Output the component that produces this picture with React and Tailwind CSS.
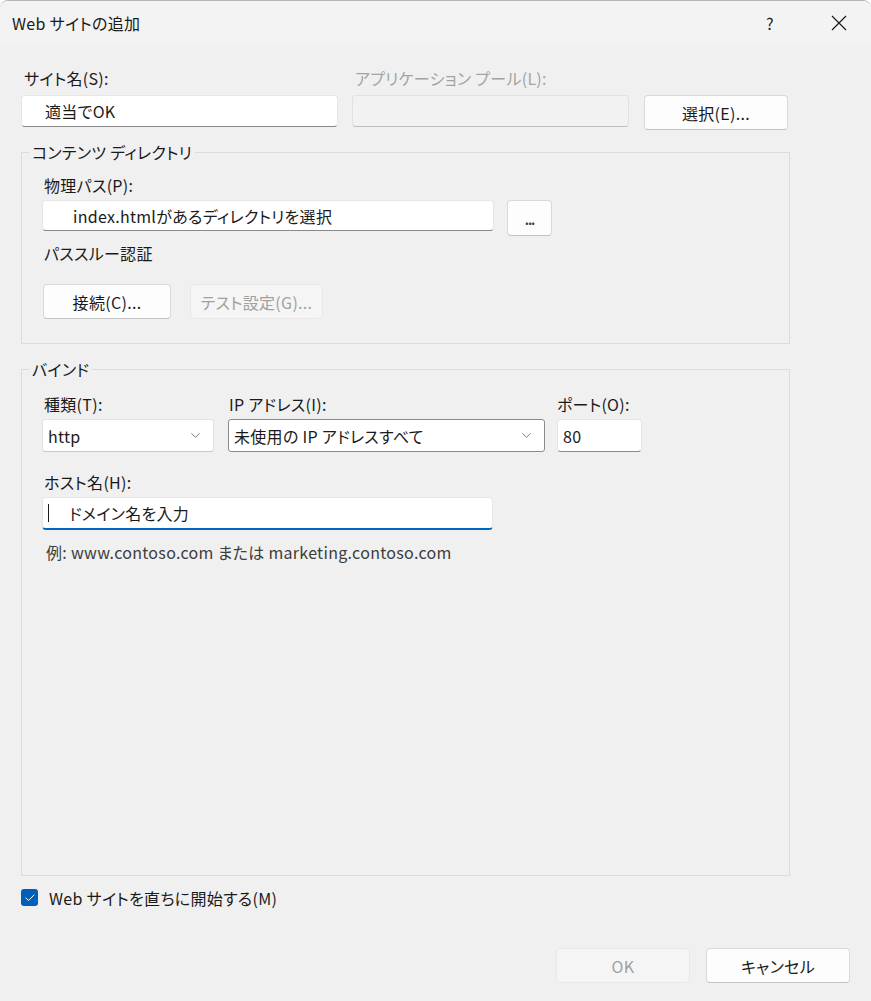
import React from 'react';
import { ChevronDown, Check } from 'lucide-react';

const font = "[font-family:'Noto_Sans_CJK_JP',sans-serif] [font-feature-settings:'palt'] tracking-[0.3px]";

const TextBox = ({ value, className = '', pad = 'pl-[5px]' }) => (
  <div
    className={`flex items-center bg-white border border-[#e6e6e6] border-b-[#8a8a8a] rounded-[4px] ${pad} ${className}`}
  >
    <span className="text-[16px] leading-[20px] text-[#1a1a1a] whitespace-nowrap">{value}</span>
  </div>
);

const Button = ({ children, className = '', disabled = false }) => (
  <button
    className={`flex items-center justify-center rounded-[4px] text-[16px] leading-[20px] ${
      disabled
        ? 'bg-[#f5f5f5] border border-[#e8e8e8] text-[#a0a0a0]'
        : 'bg-[#fdfdfd] border border-[#d9d9d9] border-b-[#c2c2c2] text-[#1a1a1a]'
    } ${className}`}
  >
    {children}
  </button>
);

const Select = ({ value, className = '', dark = false }) => (
  <div
    className={`flex items-center justify-between bg-white rounded-[3px] pl-[5px] pr-[10px] border ${
      dark ? 'border-[#8a8a8a]' : 'border-[#e3e3e3] border-b-[#c8c8c8]'
    } ${className}`}
  >
    <span className="text-[16px] leading-[20px] text-[#1a1a1a] whitespace-nowrap">{value}</span>
    <ChevronDown size={15} strokeWidth={1.3} className="text-[#5c5c5c]" />
  </div>
);

const Label = ({ children, className = '', muted = false }) => (
  <div
    className={`text-[16px] leading-[20px] whitespace-nowrap ${
      muted ? 'text-[#a3a3a3]' : 'text-[#1a1a1a]'
    } ${className}`}
  >
    {children}
  </div>
);

export default function App() {
  return (
    <div className={`w-[871px] h-[1001px] flex flex-col bg-[#f0f0f0] border-t border-[#b5b5b5] rounded-t-[8px] overflow-hidden ${font}`}>
      {/* title bar */}
      <div className="h-[44px] shrink-0 flex items-center justify-between pl-[12px] pr-[24px] bg-[#f3f3f3]">
        <span className="text-[16px] text-[#1a1a1a]">Web サイトの追加</span>
        <div className="flex items-center">
          <span className="text-[16px] text-[#1a1a1a] mr-[57px]">?</span>
          <svg width="16" height="16" viewBox="0 0 16 16">
            <path d="M1 1L15 15M15 1L1 15" stroke="#1a1a1a" strokeWidth="1.2" />
          </svg>
        </div>
      </div>

      <div className="flex-1 min-h-0 flex flex-col px-[21px]">
        {/* site name row */}
        <div className="flex items-start pt-[23px]">
          <div className="w-[317px] flex flex-col">
            <Label className="pl-[3px]">サイト名(S):</Label>
            <TextBox value="適当でOK" pad="pl-[23px]" className="mt-[7px] h-[32px]" />
          </div>
          <div className="w-[277px] ml-[14px] flex flex-col">
            <Label muted className="pl-[3px]">アプリケーション プール(L):</Label>
            <div className="mt-[7px] h-[32px] rounded-[4px] bg-[#f2f2f2] border border-[#e1e1e1] border-b-[#bdbdbd]" />
          </div>
          <Button className="ml-[15px] mt-[27px] w-[144px] h-[35px]">選択(E)...</Button>
        </div>

        {/* content directory */}
        <fieldset className="mt-[12px] w-[769px] border border-[#dcdcdc] px-[20px] pb-[24px]">
          <legend className="ml-[-13px] px-[3px] text-[16px] leading-[20px] text-[#1a1a1a]">コンテンツ ディレクトリ</legend>
          <Label className="mt-[13px] pl-[2px]">物理パス(P):</Label>
          <div className="flex items-start mt-[5px]">
            <TextBox value="index.htmlがあるディレクトリを選択" pad="pl-[30px]" className="w-[452px] h-[31px]" />
            <Button className="ml-[13px] w-[45px] h-[36px] pt-[4px]">
              <span className="text-[13px] font-bold tracking-[-1px] text-[#3a3a3a]">...</span>
            </Button>
          </div>
          <Label className="mt-[7px] pl-[2px]">パススルー認証</Label>
          <div className="flex mt-[21px] pl-[1px]">
            <Button className="w-[128px] h-[35px]">接続(C)...</Button>
            <Button disabled className="ml-[19px] w-[133px] h-[35px]">テスト設定(G)...</Button>
          </div>
        </fieldset>

        {/* bindings */}
        <fieldset className="mt-[15px] w-[769px] flex-1 min-h-0 border border-[#dcdcdc] px-[20px]">
          <legend className="ml-[-13px] px-[3px] text-[16px] leading-[20px] text-[#1a1a1a]">バインド</legend>
          <div className="flex mt-[15px]">
            <div className="w-[172px] flex flex-col">
              <Label className="pl-[2px]">種類(T):</Label>
              <Select value="http" className="mt-[5px] h-[33px]" />
            </div>
            <div className="w-[317px] ml-[14px] flex flex-col">
              <Label className="pl-[1px]">IP アドレス(I):</Label>
              <Select dark value="未使用の IP アドレスすべて" className="mt-[5px] h-[33px]" />
            </div>
            <div className="w-[85px] ml-[12px] flex flex-col">
              <Label>ポート(O):</Label>
              <TextBox value="80" className="mt-[5px] h-[33px]" />
            </div>
          </div>
          <Label className="mt-[20px] pl-[2px]">ホスト名(H):</Label>
          <div className="mt-[5px] w-[451px] h-[33px] flex items-center bg-white border border-[#e6e6e6] border-b-2 border-b-[#0067c0] rounded-[4px] pl-[5px]">
            <span className="w-px h-[18px] bg-[#1a1a1a] mr-[20px]" />
            <span className="text-[16px] leading-[20px] text-[#1a1a1a]">ドメイン名を入力</span>
          </div>
          <div className="mt-[12px] pl-[4px] text-[16px] leading-[20px] text-[#3c3c3c] whitespace-nowrap">
            例: www.contoso.com または marketing.contoso.com
          </div>
        </fieldset>

        {/* start checkbox */}
        <div className="flex items-center mt-[13px] h-[17px]">
          <div className="w-[17px] h-[17px] rounded-[3px] bg-[#005fb8] flex items-center justify-center">
            <Check size={12} strokeWidth={2} className="text-white" />
          </div>
          <span className="ml-[11px] text-[16px] leading-[20px] text-[#1a1a1a]">Web サイトを直ちに開始する(M)</span>
        </div>

        {/* footer buttons */}
        <div className="flex justify-end mt-[42px] mb-[18px]">
          <Button disabled className="w-[134px] h-[35px]">OK</Button>
          <Button className="ml-[16px] w-[144px] h-[35px]">キャンセル</Button>
        </div>
      </div>
    </div>
  );
}
